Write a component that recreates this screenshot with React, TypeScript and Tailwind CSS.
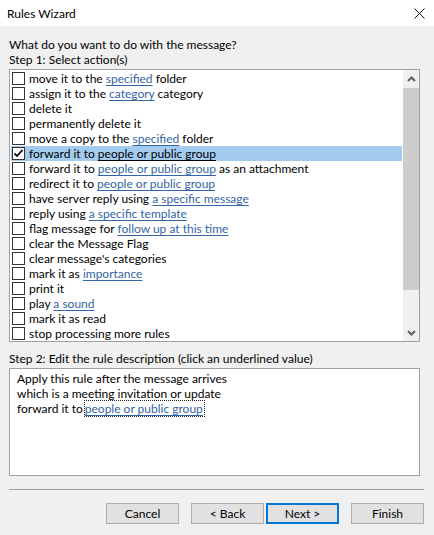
import React from "react";

type Item = { pre: string; link?: string; post?: string; checked?: boolean; selected?: boolean };

const items: Item[] = [
  { pre: "move it to the ", link: "specified", post: " folder" },
  { pre: "assign it to the ", link: "category", post: " category" },
  { pre: "delete it" },
  { pre: "permanently delete it" },
  { pre: "move a copy to the ", link: "specified", post: " folder" },
  { pre: "forward it to ", link: "people or public group", checked: true, selected: true },
  { pre: "forward it to ", link: "people or public group", post: " as an attachment" },
  { pre: "redirect it to ", link: "people or public group" },
  { pre: "have server reply using ", link: "a specific message" },
  { pre: "reply using ", link: "a specific template" },
  { pre: "flag message for ", link: "follow up at this time" },
  { pre: "clear the Message Flag" },
  { pre: "clear message's categories" },
  { pre: "mark it as ", link: "importance" },
  { pre: "print it" },
  { pre: "play ", link: "a sound" },
  { pre: "mark it as read" },
  { pre: "stop processing more rules" },
];

function Row({ it }: { it: Item }) {
  return (
    <div
      className={`flex items-center h-[15px] whitespace-nowrap ${it.selected ? "bg-[#a3cbee]" : ""}`}
    >
      <div className="ml-[1px] w-[13px] h-[13px] border border-[#333333] bg-white flex items-center justify-center shrink-0">
        {it.checked && (
          <svg width="11" height="11" viewBox="0 0 11 11">
            <path d="M1.5 5.5 L4 8 L9.5 2" fill="none" stroke="#000" strokeWidth="1.8" />
          </svg>
        )}
      </div>
      <span className="ml-[4px] leading-[15px]">
        {it.pre.endsWith(" ") ? it.pre.slice(0, -1) : it.pre}
        {it.pre.endsWith(" ") ? "\u00a0" : ""}
        {it.link && (
          <span
            className={`underline underline-offset-[2px] ${it.selected ? "text-black decoration-black" : "text-[#3465a4] decoration-[#3465a4]"}`}
          >
            {it.link}
          </span>
        )}
        {it.post}
      </span>
    </div>
  );
}

function Chevron({ up }: { up?: boolean }) {
  return (
    <svg width="9" height="6" viewBox="0 0 9 6">
      <path
        d={up ? "M1 5 L4.5 1.5 L8 5" : "M1 1 L4.5 4.5 L8 1"}
        fill="none"
        stroke="#606060"
        strokeWidth="2"
      />
    </svg>
  );
}

export default function App() {
  return (
    <div
      className="w-[434px] h-[535px] flex flex-col text-[12px] leading-[15px] text-black overflow-hidden"
      style={{ fontFamily: 'Lato, "Noto Sans", sans-serif' }}
    >
      <div className="h-[26px] bg-white flex items-center justify-between pl-[7px] pr-[9px] shrink-0">
        <span>Rules Wizard</span>
        <svg width="11" height="11" viewBox="0 0 11 11">
          <path d="M0.5 0.5 L10.5 10.5 M10.5 0.5 L0.5 10.5" stroke="#111" strokeWidth="1" />
        </svg>
      </div>
      <div className="flex-1 bg-[#f0f0f0] pl-[9px] pr-[10px] pt-[11px] flex flex-col">
        <div>What do you want to do with the message?</div>
        <div>Step 1: Select action(s)</div>
        <div className="mt-[2px] w-[411px] h-[273px] border border-[#a0a0a0] bg-white flex">
          <div className="pl-[1px] pt-[1px] w-[392px] flex flex-col">
            {items.map((it, i) => (
              <Row key={i} it={it} />
            ))}
          </div>
          <div className="ml-[1px] w-[16px] bg-[#f0f0f0] flex flex-col">
            <div className="h-[18px] flex items-center justify-center">
              <Chevron up />
            </div>
            <div className="h-[202px] bg-[#cdcdcd]" />
            <div className="flex-1" />
            <div className="h-[17px] flex items-center justify-center">
              <Chevron />
            </div>
          </div>
        </div>
        <div className="mt-[9px]">Step 2: Edit the rule description (click an underlined value)</div>
        <div className="mt-[2px] w-[411px] h-[108px] border border-[#a0a0a0] bg-white pl-[7px] pt-[2px]">
          <div>Apply this rule after the message arrives</div>
          <div>which is a meeting invitation or update</div>
          <div className="flex">
            <span>forward it to</span>
            <span className="ml-[2px] outline outline-1 outline-dotted outline-[#222] text-[#3465a4] underline decoration-[#3465a4] underline-offset-[2px] pr-[1px]">
              people or public group
            </span>
          </div>
        </div>
        <div className="mt-[13px] h-[1px] bg-[#a0a0a0]" />
        <div className="mt-[13px] flex justify-end">
          <button className="w-[73px] h-[21px] border border-[#adadad] bg-[#e1e1e1] flex items-center justify-center">
            Cancel
          </button>
          <button className="ml-[12px] w-[73px] h-[21px] border border-[#adadad] bg-[#e1e1e1] flex items-center justify-center">
            &lt; Back
          </button>
          <button className="ml-[2px] w-[73px] h-[21px] border-2 border-[#0078d7] bg-[#e1e1e1] flex items-center justify-center">
            Next &gt;
          </button>
          <button className="ml-[12px] w-[73px] h-[21px] border border-[#adadad] bg-[#e1e1e1] flex items-center justify-center">
            Finish
          </button>
        </div>
      </div>
    </div>
  );
}
